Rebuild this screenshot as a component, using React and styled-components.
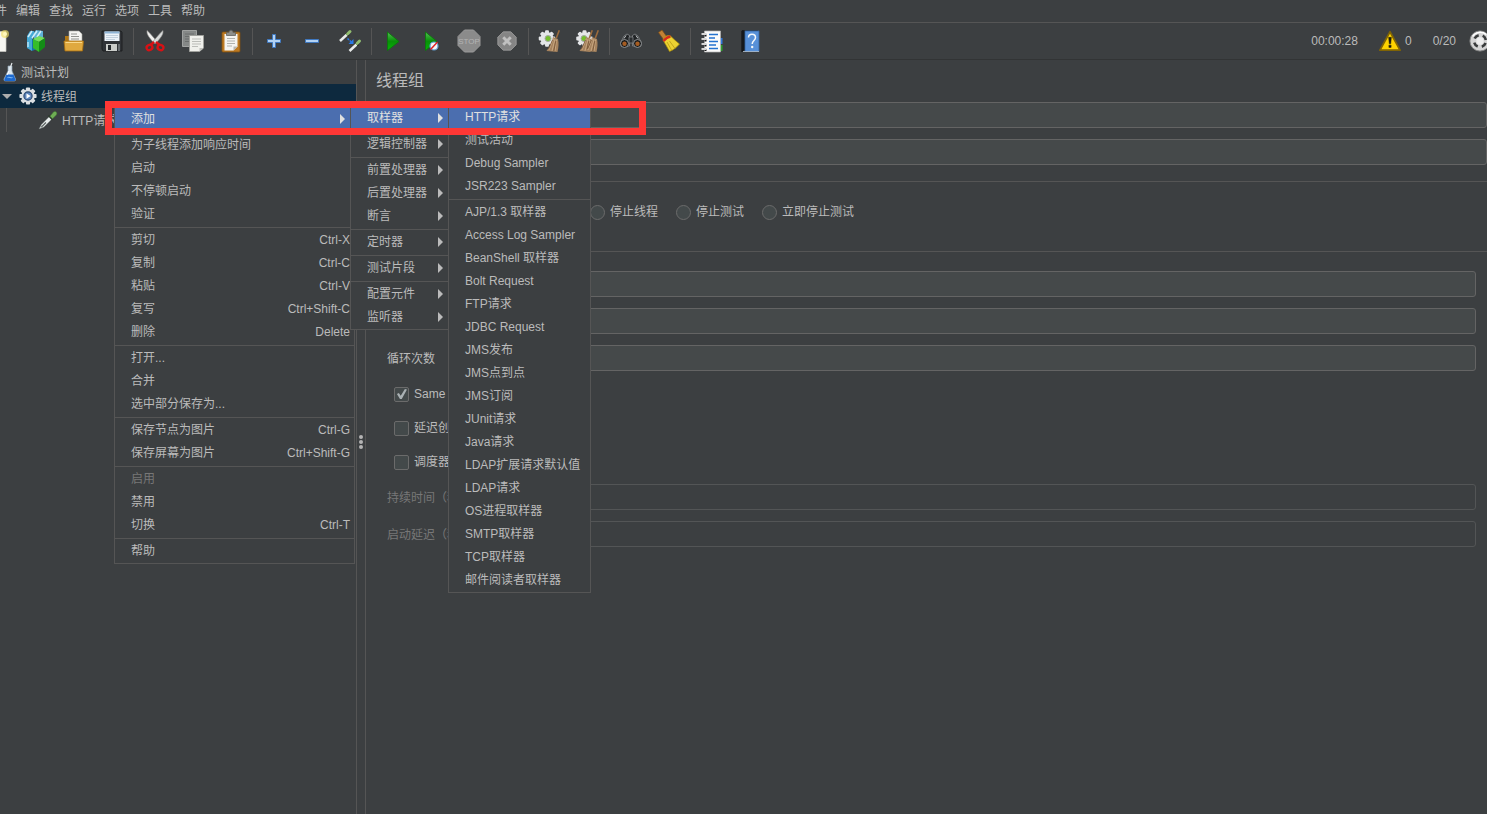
import { useId } from 'react';
import styled, { createGlobalStyle, css } from 'styled-components';

const GlobalStyle = createGlobalStyle`
  :root {
    --bg: #3c3f41;
    --line: #555555;
    --text: #bbbbbb;
    --muted: #777777;
    --field: #45494a;
    --field-line: #646464;
    --selected: #4b6eaf;
  }

  * {
    box-sizing: border-box;
  }

  body {
    margin: 0;
    background: var(--bg);
    overflow: hidden;
  }

  body, button, input {
    font-family: 'Liberation Sans', 'Noto Sans CJK SC', sans-serif;
    font-size: 12px;
    line-height: 18px;
    color: var(--text);
  }
`;

const Window = styled.div`
  position: relative;
  display: flex;
  flex-direction: column;
  min-height: 100vh;
  overflow: hidden;
`;

/* ---------- Menu bar ---------- */

const MenuBar = styled.nav`
  display: flex;
  gap: 9px;
  height: 23px;
  margin-left: -17px;
  border-bottom: 1px solid var(--line);
`;

const MenuBarButton = styled.button`
  border: none;
  background: none;
  padding: 0;
  white-space: nowrap;
`;

/* ---------- Toolbar ---------- */

const Toolbar = styled.div`
  display: flex;
  justify-content: space-between;
  height: 37px;
  border-bottom: 1px solid #323435;
`;

const ToolGroup = styled.div`
  display: flex;
  align-items: center;
  margin-left: -21px;
`;

const ToolButton = styled.button`
  display: flex;
  align-items: center;
  justify-content: center;
  width: 38px;
  height: 36px;
  border: none;
  background: none;
  padding: 0;
  flex-shrink: 0;
`;

const ToolSeparator = styled.span`
  width: 1px;
  height: 27px;
  margin: 0 2px;
  background: var(--line);
  flex-shrink: 0;
`;

const Status = styled.div`
  display: flex;
  align-items: center;
  margin-right: -4px;
`;

const Elapsed = styled.span`
  margin-right: 21px;
`;

const WarningButton = styled.button`
  display: flex;
  align-items: center;
  gap: 4px;
  border: none;
  background: none;
  padding: 0;
`;

const ThreadCount = styled.span`
  margin: 0 13px 0 21px;
`;

/* ---------- Split pane ---------- */

const Split = styled.div`
  display: flex;
  flex: 1;
`;

const Tree = styled.ul`
  width: 356px;
  margin: 0;
  padding: 0;
  list-style: none;
  flex-shrink: 0;
`;

const TreeRow = styled.li`
  display: flex;
  align-items: center;
  gap: 4px;
  height: 24px;
  padding-left: ${props => props.$indent}px;
  background: ${props => (props.$active ? '#0d293e' : 'none')};
`;

const TreeLabel = styled.span`
  padding-top: 2px;
  white-space: nowrap;
`;

const TreeGuide = styled.span`
  align-self: stretch;
  width: 1px;
  margin-right: 27px;
  background: var(--line);
`;

const Expander = styled.span`
  margin-right: 3px;
  border: 5px solid transparent;
  border-top-color: #adadad;
  border-bottom-width: 0;
`;

const Divider = styled.div`
  display: flex;
  flex-direction: column;
  justify-content: center;
  align-items: center;
  gap: 1px;
  width: 10px;
  padding-top: 9px;
  border: 1px solid var(--line);
  border-width: 0 1px;
  flex-shrink: 0;
`;

const Dot = styled.span`
  width: 4px;
  height: 4px;
  border-radius: 50%;
  background: #b4b4b4;
`;

/* ---------- Thread group form ---------- */

const Editor = styled.form`
  flex: 1;
  min-width: 0;
`;

const Title = styled.h1`
  margin: 0;
  padding-left: 10px;
  font-size: 16px;
  font-weight: 400;
  line-height: 42px;
`;

const Fields = styled.div`
  display: grid;
  grid-template-columns: 130px 1fr;
  align-items: center;
  row-gap: 11px;
  padding: ${props => (props.$inner ? '0 11px 0 21px' : '0 0 0 10px')};
`;

const FieldLabel = styled.label`
  padding-top: 2px;
  white-space: nowrap;
  color: ${props => (props.$off ? 'var(--muted)' : 'var(--text)')};
`;

const TextInput = styled.input`
  width: 100%;
  min-width: 0;
  height: 26px;
  padding: 0 6px;
  border: 1px solid var(--field-line);
  border-radius: 3px;
  background: var(--field);

  &:disabled {
    border-color: #535556;
    background: var(--bg);
  }
`;

const ErrorSection = styled.section`
  margin-top: 16px;
  border-top: 1px solid var(--line);
`;

const PropertiesSection = styled.section`
  padding-top: 19px;
  border-top: 1px solid var(--line);
`;

const RadioRow = styled.div`
  display: flex;
  gap: 18px;
  padding: 20px 0 29px 28px;
`;

const Choice = styled.label`
  display: flex;
  align-items: center;
  gap: 5px;
  height: 20px;
  white-space: nowrap;
`;

const choiceBox = css`
  appearance: none;
  width: 15px;
  height: 15px;
  margin: 0;
  border: 1px solid #6b6b6b;
  background: #43494a;
  flex-shrink: 0;
`;

const Radio = styled.input`
  ${choiceBox}
  border-radius: 50%;

  &:checked {
    box-shadow: inset 0 0 0 4px #43494a;
    background: var(--text);
  }
`;

const Checkbox = styled.input`
  ${choiceBox}
  border-radius: 2px;

  &:checked::before {
    content: '';
    display: block;
    width: 13px;
    height: 13px;
    background: #a9b0b3;
    clip-path: polygon(15% 50%, 30% 42%, 44% 64%, 76% 12%, 92% 16%, 52% 88%, 38% 88%);
  }
`;

const CheckList = styled.div`
  display: flex;
  flex-direction: column;
  gap: 14px;
  padding: 13px 0 12px 28px;
`;

/* ---------- Popup menus ---------- */

const Menu = styled.ul`
  position: absolute;
  top: ${props => (props.$root ? '107px' : '-2px')};
  left: ${props => (props.$root ? '114px' : `calc(100% - ${props.$overlap}px)`)};
  z-index: 2;
  width: ${props => props.$width}px;
  margin: 0;
  padding: 0;
  border: 1px solid var(--line);
  background: var(--bg);
  list-style: none;
`;

const MenuEntry = styled.li`
  position: relative;
`;

const MenuDivider = styled.li`
  height: 3px;
  border-top: 1px solid var(--bg);
  border-bottom: 1px solid var(--bg);
  background: var(--line);
`;

const MenuButton = styled.button`
  display: flex;
  align-items: center;
  justify-content: space-between;
  width: 100%;
  height: 23px;
  padding: 0 4px 1px 16px;
  border: none;
  background: ${props => (props.$active ? 'var(--selected)' : 'none')};
  color: ${props => (props.$active ? '#e0e0e0' : 'var(--text)')};
  text-align: left;
  white-space: nowrap;

  &:disabled {
    color: var(--muted);
  }
`;

const MenuArrow = styled.span`
  margin-right: ${props => props.$overlap + 1}px;
  border: 5px solid transparent;
  border-left-color: currentColor;
  border-right-width: 0;
`;

// red frame over the Add > Sampler > HTTP Request path
const Highlight = styled.div`
  position: absolute;
  top: 101px;
  left: 105px;
  z-index: 3;
  width: 541px;
  height: 34px;
  border: 7px solid #fe3735;
  pointer-events: none;
`;

/* ---------- Icons ---------- */

function Svg({ size = 24, children }) {
  return (
    <svg width={size} height={size} viewBox="0 0 24 24" fill="none" aria-hidden="true">
      {children}
    </svg>
  );
}

const OCTAGON = 'M7.5 1h9L23 7.5v9L16.500 23h-9L1 16.500v-9z';

function GearShape({ cx = 12, cy = 12, r = 8, fill = '#e4e6e8' }) {
  return (
    <g transform={`translate(${cx} ${cy})`} fill={fill}>
      {[0, 45, 90, 135].map(a => (
        <rect key={a} x={-r * 0.3} y={-r * 1.27} width={r * 0.6} height={r * 2.54} rx="1" transform={`rotate(${a})`} />
      ))}
      <circle r={r} />
    </g>
  );
}

function BroomShape({ x = 0 }) {
  return (
    <g transform={`translate(${x} 0)`}>
      <path d="M20.500 1l1.500.5-3 8-1.500-.5z" fill="#9c6b3c" />
      <path d="M15 8l5 2c1 4 .5 9-.5 13l-11-1c3-4 5.500-9 6.500-14z" fill="#a5825d" />
      <path d="M15.500 9.500L11 21M17 10l-3 12M18.500 10.500L17 22" stroke="#d0b08a" strokeWidth=".8" />
      <path d="M14.500 11l-4 9M17.800 12l-2 10" stroke="#6d4c2e" strokeWidth=".7" />
    </g>
  );
}

function PipetteShape() {
  return (
    <g>
      <path d="M1.500 22.500l3-5.500L14 7.500l3 3L7 20.500z" fill="#e8ecec" stroke="#8b9492" strokeWidth=".7" />
      <path d="M4 20.500L9.500 15" stroke="#59605f" strokeWidth="1.500" />
      <path d="M12.500 6.500l5 5" stroke="#2f3b30" strokeWidth="2.200" />
      <path d="M14.500 7.500l4-5c2-2 5.500.5 3.500 3.500L17.500 10.500z" fill="#6fae55" stroke="#3d7a2d" strokeWidth=".6" />
    </g>
  );
}

const NewIcon = () => (
  <Svg>
    <path d="M3 2.500h17V22.500H3z" fill="#f7f7f2" stroke="#c9c9c3" strokeWidth=".7" />
    <circle cx="19" cy="5" r="4" fill="#f5e268" opacity=".65" />
    <circle cx="19" cy="5" r="2" fill="#fff8bd" />
  </Svg>
);

const TemplatesIcon = () => (
  <Svg>
    <path d="M3 9l5 2v11l-5-3zM3 7l3-5 4 0 1 3-3 6-5-1z" fill="#44a9d6" />
    <path d="M8 11l5-3v12l-5 2z" fill="#1674a7" />
    <path d="M9 5l3-4 7 1v8l-8 2z" fill="#5fb1d6" />
    <path d="M4 8l4-6M8 9l5-7M13 8l4-6" stroke="#d2eef9" strokeWidth="1.500" />
    <path d="M9 10l6-3 6 2-6 4z" fill="#75de5b" />
    <path d="M9 10l6 3v10l-6-4z" fill="#36bd29" />
    <path d="M15 13l6-4v9l-6 5z" fill="#138d16" />
    <path d="M4 13v5" stroke="#b6e5f8" strokeWidth="1.500" />
  </Svg>
);

const OpenIcon = () => (
  <Svg>
    <path d="M3 7h5l2 3h10v10H3z" fill="#b07715" />
    <path d="M7 2h10l3 3v10H7z" fill="#f5f5f2" stroke="#a5a5a0" strokeWidth=".6" />
    <path d="M9 5h6M9 7.500h8M9 10h8" stroke="#92938f" />
    <path d="M2 12h19.500l-1 10H3z" fill="#e0a93f" stroke="#a76d0d" strokeWidth=".8" />
    <path d="M3.500 13.500h16.500" stroke="#f9d889" />
  </Svg>
);

const SaveIcon = () => (
  <Svg>
    <path d="M2 2h19l1 1.500V22H3l-1-2z" fill="#303337" stroke="#17191b" strokeWidth=".8" />
    <path d="M4.500 2.500h15V12h-15z" fill="#ecf3f9" />
    <path d="M4.500 2.500h15v2h-15z" fill="#8fb5d6" />
    <path d="M6 6.500h12M6 8.500h12M6 10.500h9" stroke="#b7c8d7" strokeWidth=".8" />
    <path d="M6 15h11v7H6z" fill="#cbcdca" />
    <path d="M8 16h3v5H8z" fill="#25292c" />
    <path d="M18 15h2v7h-2z" fill="#676c70" />
  </Svg>
);

const CutIcon = () => (
  <Svg>
    <path d="M4 1.500c-.5 4 2 7 7.500 13l2.500-2C11 9 7 4 4 1.500z" fill="#f0f0ee" stroke="#8d8d8b" strokeWidth=".6" />
    <path d="M20 1.500c.5 4-2 7-7.500 13l-2.500-2C13 9 17 4 20 1.500z" fill="#d9dbda" stroke="#8d8d8b" strokeWidth=".6" />
    <path d="M11 13l-3.500 3M13 13l3.500 3" stroke="#d81115" strokeWidth="2.500" />
    <ellipse cx="6.500" cy="18.500" rx="3" ry="2.500" stroke="#d81115" strokeWidth="2.300" transform="rotate(-30 6.500 18.500)" />
    <ellipse cx="17.500" cy="18.500" rx="3" ry="2.500" stroke="#d81115" strokeWidth="2.300" transform="rotate(30 17.500 18.500)" />
  </Svg>
);

const CopyIcon = () => (
  <Svg>
    <path d="M1.500 1.500h14v16h-14z" fill="#858887" stroke="#a0a2a1" />
    <path d="M4 5h9M4 7.500h9M4 10h5M4 12.500h4" stroke="#6a6d6c" />
    <path d="M8.500 6.500h14V19l-4 3.500h-10z" fill="#f0f0ec" stroke="#a0a19d" />
    <path d="M11 10h9M11 12.500h9M11 15h9M11 17.500h6" stroke="#bcbdb9" />
    <path d="M18.500 22.500V19h4z" fill="#bfc0bc" />
  </Svg>
);

const PasteIcon = () => (
  <Svg>
    <rect x="3" y="3" width="18" height="20" rx="1" fill="#bd7a22" stroke="#80500f" strokeWidth=".8" />
    <path d="M5.500 5h13v12.500l-4 4h-9z" fill="#f4f4f1" />
    <path d="M8 9.500h8M8 12h8M8 14.500h8M8 17h5" stroke="#b1b2ae" />
    <path d="M14.500 21.500v-4h4z" fill="#b5b6b2" />
    <path d="M7.500 6.500v-3h2.500c0-3 4-3 4 0h2.500v3z" fill="#8d8e8a" stroke="#62635f" strokeWidth=".8" />
  </Svg>
);

const PlusIcon = () => (
  <Svg>
    <path d="M10.500 5.500h3v5h5v3h-5v5h-3v-5h-5v-3h5z" fill="#b2d2f3" stroke="#3f78c0" />
  </Svg>
);

const MinusIcon = () => (
  <Svg>
    <path d="M5.500 10.500h13v3h-13z" fill="#b2d2f3" stroke="#3f78c0" />
  </Svg>
);

const ToggleIcon = () => (
  <Svg>
    <path d="M2 12L9 5.500" stroke="#e9eceb" strokeWidth="2.500" />
    <path d="M8 4l3 3" stroke="#1e2720" strokeWidth="1.500" />
    <path d="M9.500 5L12 2.500" stroke="#91bd70" strokeWidth="3" strokeLinecap="round" />
    <path d="M11.500 22L18.500 15.500" stroke="#e9eceb" strokeWidth="2.500" />
    <path d="M17.500 13.500l3 3" stroke="#1e2720" strokeWidth="1.500" />
    <path d="M19 14.500l2.500-2.500" stroke="#91bd70" strokeWidth="3" strokeLinecap="round" />
    <path d="M9.500 9.500l4 3.500" stroke="#2879e8" strokeWidth="1.500" strokeDasharray="2 1" />
    <path d="M15.500 10v5h-5z" fill="#2879e8" />
  </Svg>
);

function PlayShape() {
  const id = useId();
  return (
    <>
      <linearGradient id={id} x1="0" y1="0" x2="0" y2="1">
        <stop offset="0" stopColor="#55c255" />
        <stop offset=".5" stopColor="#089008" />
        <stop offset="1" stopColor="#05b505" />
      </linearGradient>
      <path d="M6.500 3L18 12.500 6.500 21.500z" fill={`url(#${id})`} stroke="#087a08" strokeWidth=".8" />
    </>
  );
}

const PlayIcon = () => <Svg><PlayShape /></Svg>;

const PlayNoTimersIcon = () => (
  <Svg>
    <PlayShape />
    <circle cx="15" cy="17" r="4" fill="#f2f6f8" stroke="#5f9bd0" strokeWidth="1.200" />
    <path d="M11.500 20.500l7-7.500" stroke="#dd2222" strokeWidth="1.500" />
  </Svg>
);

const StopIcon = () => (
  <Svg>
    <path d={OCTAGON} fill="#8b8b8b" stroke="#9a9a9a" />
    <text x="12" y="15" textAnchor="middle" fontFamily="Liberation Sans" fontSize="8" fill="#b4b4b4">STOP</text>
  </Svg>
);

const ShutdownIcon = () => (
  <Svg size={20}>
    <path d={OCTAGON} fill="#858585" stroke="#a0a0a0" />
    <path d="M7.500 7.500l9 9M16.500 7.500l-9 9" stroke="#c0c0c0" strokeWidth="3.500" />
  </Svg>
);

const ClearIcon = () => (
  <Svg>
    <GearShape cx={9} cy={9.5} r={6.5} />
    <circle cx="10" cy="9.500" r="3" fill="#73bf2c" stroke="#a5a8a5" />
    <BroomShape />
  </Svg>
);

const ClearAllIcon = () => (
  <Svg>
    <GearShape cx={8.5} cy={9.5} r={6.5} />
    <circle cx="8" cy="9.500" r="3" fill="#73bf2c" stroke="#a5a8a5" />
    <BroomShape x={-5} />
    <BroomShape x={1} />
  </Svg>
);

const SearchIcon = () => (
  <Svg>
    <path d="M5 7l3-2 2.500 1.500V17H2v-4zM19 7l-3-2-2.500 1.500V17H22v-4z" fill="#202325" stroke="#85898b" strokeWidth=".8" />
    <path d="M10 8h4v6h-4z" fill="#2b2e30" stroke="#8b8e90" strokeWidth=".7" />
    <circle cx="5.500" cy="14.500" r="4" fill="#17191a" stroke="#909395" />
    <circle cx="18.500" cy="14.500" r="4" fill="#17191a" stroke="#909395" />
    <circle cx="5.500" cy="14.800" r="2.200" fill="#a65d23" />
    <circle cx="18.500" cy="14.800" r="2.200" fill="#a65d23" />
    <path d="M7 6.500l-2 3M17 6.500l2 3" stroke="#c4c7c9" />
  </Svg>
);

const BroomIcon = () => (
  <Svg>
    <path d="M1.500 3.500l3.500-2.500 5 7-3.500 2.500z" fill="#c28135" stroke="#7e4d15" strokeWidth=".7" />
    <path d="M6 11c.5-3 5-5.500 7.500-4 3 3 6 5.500 9 8-3 3.500-6 6-10 7.500-2-4-4-7-6.500-11.500z" fill="#edd232" stroke="#a48605" strokeWidth=".7" />
    <path d="M10 13l4.500 8M12.500 12l5.500 7.500" stroke="#b79a15" strokeWidth=".8" />
    <path d="M6.500 12c2-2.500 4-4 7-4.500" stroke="#d62b1e" strokeWidth="2.500" />
  </Svg>
);

const HelperIcon = () => (
  <Svg>
    <path d="M19 9h3.500v6H19z" fill="#2e77da" />
    <path d="M19 16h3.500v6H19z" fill="#2f9d2f" />
    <path d="M4.500 2h16v21h-16z" fill="#fbfbfb" stroke="#b5b5b5" strokeWidth=".7" />
    <path d="M9 5.500h9M9 9h6M9 12.500h9M9 16h7M9 19.500h9" stroke="#2673cf" strokeWidth="1.300" />
    <path d="M4.500 6.500h2M4.500 11.500h2M4.500 16.500h2M4.500 21h2" stroke="#18191a" strokeWidth="2" />
    <path d="M1.500 5H6.500M1.500 10H6.500M1.500 15H6.500M1.500 20H6.500" stroke="#d6d6d6" strokeWidth="2" />
  </Svg>
);

const HelpIcon = () => (
  <Svg>
    <path d="M3.500 2l2-1v21l-2 1z" fill="#08090a" />
    <path d="M4 1.500h16v20H4z" fill="#16191c" />
    <path d="M7 2h14v20.500H7z" fill="#5790d8" stroke="#3464a3" strokeWidth=".8" />
    <path d="M5 22.500h16" stroke="#b7c4d0" strokeWidth=".8" />
    <path d="M10.500 8.500c0-4.500 7-4.500 7 0 0 3-3.300 3-3.300 6.500" stroke="#f4f8fb" strokeWidth="1.500" />
    <circle cx="14.200" cy="18" r="1.200" fill="#f4f8fb" />
  </Svg>
);

const WarningIcon = () => (
  <Svg size={22}>
    <path d="M12 2L23 22H1z" fill="#ffd400" stroke="#806405" strokeWidth="2" strokeLinejoin="round" />
    <path d="M10.500 8h3l-.7 7h-1.600zM10.800 16.500h2.400V19h-2.400z" fill="#1d1b10" stroke="#1d1b10" strokeWidth=".5" />
  </Svg>
);

const EngineIcon = () => (
  <Svg size={22}>
    <circle cx="12" cy="12" r="11" fill="#d4d4d4" stroke="#8a8a8a" />
    <circle cx="12" cy="12" r="6.500" stroke="#393b3c" strokeWidth="2.800" strokeDasharray="5.600 4.610" strokeDashoffset="-2.300" />
    <circle cx="12" cy="12" r="4" fill="#eeeeee" />
    <path d="M4 7c3-5 10-6 15-2" stroke="#fff" strokeWidth="1.500" />
  </Svg>
);

const FlaskIcon = () => (
  <svg width="14" height="20" viewBox="0 0 14 20" fill="none" aria-hidden="true">
    <path d="M5 4h4v5l3.500 8c.3 1.500-.5 2-1.500 2H2.500c-1 0-1.800-.5-1.500-2l4-8z" fill="#dce7ef" stroke="#8ca2b1" strokeWidth=".7" />
    <path d="M3.500 12.500h7l2 5c0 1-.7 1.500-1.500 1.500H2.500c-1 0-1.500-.5-1.200-1.500z" fill="#1d69ce" />
    <path d="M4.500 15.500c2-1 3 1 5 0" stroke="#82bdf5" />
    <path d="M7.500 5l1.500-4" stroke="#e7ecef" strokeWidth="1.200" />
    <path d="M6 9l-2 4" stroke="#fff" />
  </svg>
);

const ThreadGroupIcon = () => (
  <Svg size={18}>
    <GearShape r={9} fill="#dcdfe2" />
    <circle cx="12" cy="12" r="5.500" fill="#5f86bc" stroke="#27466f" strokeWidth="1.500" />
    <path d="M10 8.500l5.500 3.500-5.500 3.500z" fill="#fff" />
  </Svg>
);

const SamplerIcon = () => <Svg size={20}><PipetteShape /></Svg>;

/* ---------- Data ---------- */

const MENU_BAR = ['文件', '编辑', '查找', '运行', '选项', '工具', '帮助'];

const TOOLS = [
  [['新建', NewIcon], ['模板', TemplatesIcon], ['打开', OpenIcon], ['保存', SaveIcon]],
  [['剪切', CutIcon], ['复制', CopyIcon], ['粘贴', PasteIcon]],
  [['展开', PlusIcon], ['折叠', MinusIcon], ['切换', ToggleIcon]],
  [['启动', PlayIcon], ['不停顿启动', PlayNoTimersIcon], ['停止', StopIcon], ['关闭', ShutdownIcon]],
  [['清除', ClearIcon], ['清除全部', ClearAllIcon]],
  [['搜索', SearchIcon], ['重置搜索', BroomIcon]],
  [['函数助手', HelperIcon], ['帮助', HelpIcon]],
];

// null is a separator line
const SAMPLERS = [
  { label: 'HTTP请求', active: true },
  { label: '测试活动' },
  { label: 'Debug Sampler' },
  { label: 'JSR223 Sampler' },
  null,
  { label: 'AJP/1.3 取样器' },
  { label: 'Access Log Sampler' },
  { label: 'BeanShell 取样器' },
  { label: 'Bolt Request' },
  { label: 'FTP请求' },
  { label: 'JDBC Request' },
  { label: 'JMS发布' },
  { label: 'JMS点到点' },
  { label: 'JMS订阅' },
  { label: 'JUnit请求' },
  { label: 'Java请求' },
  { label: 'LDAP扩展请求默认值' },
  { label: 'LDAP请求' },
  { label: 'OS进程取样器' },
  { label: 'SMTP取样器' },
  { label: 'TCP取样器' },
  { label: '邮件阅读者取样器' },
];

const ADD_MENU = [
  { label: '取样器', arrow: true, active: true, items: SAMPLERS, width: 143, overlap: 0 },
  null,
  { label: '逻辑控制器', arrow: true },
  null,
  { label: '前置处理器', arrow: true },
  { label: '后置处理器', arrow: true },
  { label: '断言', arrow: true },
  null,
  { label: '定时器', arrow: true },
  null,
  { label: '测试片段', arrow: true },
  null,
  { label: '配置元件', arrow: true },
  { label: '监听器', arrow: true },
];

const CONTEXT_MENU = [
  { label: '添加', arrow: true, active: true, items: ADD_MENU, width: 99, overlap: 4 },
  null,
  { label: '为子线程添加响应时间' },
  { label: '启动' },
  { label: '不停顿启动' },
  { label: '验证' },
  null,
  { label: '剪切', keys: 'Ctrl-X' },
  { label: '复制', keys: 'Ctrl-C' },
  { label: '粘贴', keys: 'Ctrl-V' },
  { label: '复写', keys: 'Ctrl+Shift-C' },
  { label: '删除', keys: 'Delete' },
  null,
  { label: '打开...' },
  { label: '合并' },
  { label: '选中部分保存为...' },
  null,
  { label: '保存节点为图片', keys: 'Ctrl-G' },
  { label: '保存屏幕为图片', keys: 'Ctrl+Shift-G' },
  null,
  { label: '启用', disabled: true },
  { label: '禁用' },
  { label: '切换', keys: 'Ctrl-T' },
  null,
  { label: '帮助' },
];

const ERROR_ACTIONS = ['继续', '启动下一进程循环', '停止线程', '停止测试', '立即停止测试'];

function PopupMenu({ items, width, root, overlap = 0 }) {
  return (
    <Menu role="menu" $root={root} $width={width} $overlap={overlap}>
      {items.map((item, i) => {
        if (!item) return <MenuDivider key={i} role="separator" />;
        return (
          <MenuEntry key={item.label} role="none">
            <MenuButton type="button" role="menuitem" $active={item.active} disabled={item.disabled}>
              <span>{item.label}</span>
              {item.keys ? <span>{item.keys}</span> : null}
              {item.arrow ? <MenuArrow $overlap={item.overlap || 0} /> : null}
            </MenuButton>
            {item.items ? <PopupMenu items={item.items} width={item.width} overlap={item.overlap} /> : null}
          </MenuEntry>
        );
      })}
    </Menu>
  );
}

function Field({ label, disabled }) {
  const id = useId();
  return (
    <>
      <FieldLabel htmlFor={id} $off={disabled}>{label}</FieldLabel>
      <TextInput id={id} type="text" disabled={disabled} />
    </>
  );
}

function ToolbarButtons() {
  return (
    <ToolGroup>
      {TOOLS.map((group, i) => [
        i > 0 ? <ToolSeparator key={`sep${i}`} /> : null,
        ...group.map(([name, Icon]) => (
          <ToolButton key={name} type="button" aria-label={name}>
            <Icon />
          </ToolButton>
        )),
      ])}
    </ToolGroup>
  );
}

export default function App() {
  return (
    <Window>
      <GlobalStyle />
      <MenuBar>
        {MENU_BAR.map(name => <MenuBarButton key={name} type="button">{name}</MenuBarButton>)}
      </MenuBar>
      <Toolbar>
        <ToolbarButtons />
        <Status>
          <Elapsed>00:00:28</Elapsed>
          <WarningButton type="button"><WarningIcon />0</WarningButton>
          <ThreadCount>0/20</ThreadCount>
          <EngineIcon />
        </Status>
      </Toolbar>
      <Split>
        <Tree>
          <TreeRow $indent={3}><FlaskIcon /><TreeLabel>测试计划</TreeLabel></TreeRow>
          <TreeRow $indent={2} $active><Expander /><ThreadGroupIcon /><TreeLabel>线程组</TreeLabel></TreeRow>
          <TreeRow $indent={6}><TreeGuide /><SamplerIcon /><TreeLabel>HTTP请求</TreeLabel></TreeRow>
        </Tree>
        <Divider><Dot /><Dot /><Dot /></Divider>
        <Editor>
          <Title>线程组</Title>
          <Fields>
            <Field label="名称：" />
            <Field label="注释：" />
          </Fields>
          <ErrorSection>
            <RadioRow role="radiogroup" aria-label="在取样器错误后要执行的动作">
              {ERROR_ACTIONS.map((name, i) => (
                <Choice key={name}>
                  <Radio type="radio" name="onError" defaultChecked={i === 0} />
                  {name}
                </Choice>
              ))}
            </RadioRow>
          </ErrorSection>
          <PropertiesSection>
            <Fields $inner>
              <Field label="线程数：" />
              <Field label="Ramp-Up时间（秒）：" />
              <Field label="循环次数" />
            </Fields>
            <CheckList>
              <Choice><Checkbox type="checkbox" defaultChecked />Same user on each iteration</Choice>
              <Choice><Checkbox type="checkbox" />延迟创建线程直到需要</Choice>
              <Choice><Checkbox type="checkbox" />调度器</Choice>
            </CheckList>
            <Fields $inner>
              <Field label="持续时间（秒）" disabled />
              <Field label="启动延迟（秒）" disabled />
            </Fields>
          </PropertiesSection>
        </Editor>
      </Split>
      <PopupMenu root items={CONTEXT_MENU} width={241} />
      <Highlight />
    </Window>
  );
}
